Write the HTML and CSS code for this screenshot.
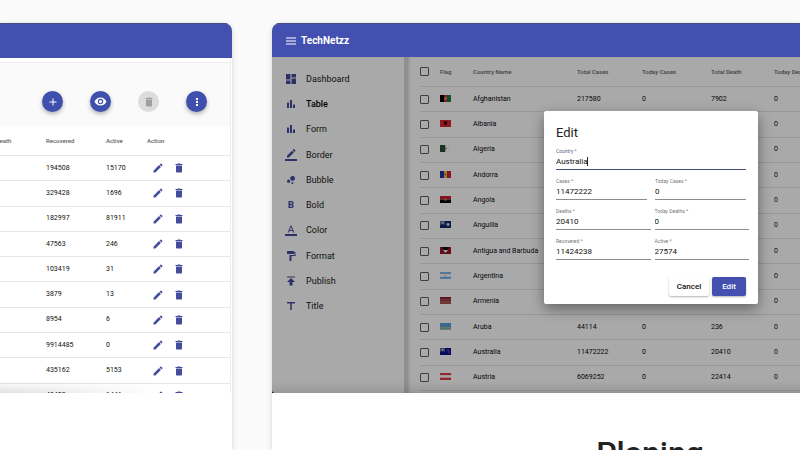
FILE: index.html
```html
<!DOCTYPE html>
<html lang="en">
<head>
<meta charset="utf-8">
<title>TechNetzz</title>
<link rel="stylesheet" href="styles.css">
</head>
<body>
<svg class="defs" aria-hidden="true">
  <symbol id="pen" viewBox="0 0 24 24"><path d="M3 17.25V21h3.75L17.81 9.94l-3.75-3.75zM20.71 7.04a1 1 0 0 0 0-1.41l-2.34-2.34a1 1 0 0 0-1.41 0l-1.83 1.83 3.75 3.75z"/></symbol>
  <symbol id="bin" viewBox="0 0 24 24"><path d="M6 19c0 1.100.9 2 2 2h8c1.100 0 2-.9 2-2V7H6zM19 4h-3.500l-1-1h-5l-1 1H5v2h14z"/></symbol>
  <symbol id="bars" viewBox="0 0 24 24"><path d="M4 9h4v11H4zM16 13h4v7h-4zM10 4h4v16h-4z"/></symbol>
</svg>
<main class="gallery">
  <article class="card">
    <header class="bar"></header>
    <div class="shot sheet">
      <div class="tools">
        <button class="fab" aria-label="Add"><svg viewBox="0 0 24 24"><path d="M19 13h-6v6h-2v-6H5v-2h6V5h2v6h6z"/></svg></button>
        <button class="fab" aria-label="View"><svg class="eye" viewBox="0 0 24 24"><path d="M12 4.500C7 4.500 2.730 7.610 1 12c1.730 4.390 6 7.500 11 7.500s9.270-3.110 11-7.500c-1.730-4.390-6-7.500-11-7.500zM12 17a5 5 0 1 1 0-10 5 5 0 0 1 0 10zm0-8a3 3 0 1 0 0 6 3 3 0 0 0 0-6z"/></svg></button>
        <button class="fab off" aria-label="Delete" disabled><svg viewBox="0 0 24 24"><use href="#bin"/></svg></button>
        <button class="fab" aria-label="More"><svg viewBox="0 0 24 24"><path d="M10 4h4v4h-4zM10 10h4v4h-4zM10 16h4v4h-4z"/></svg></button>
      </div>
      <table class="grid results">
        <thead><tr><th class="c-today">Today Death</th><th class="c-rec">Recovered</th><th class="c-act">Active</th><th>Action</th></tr></thead>
        <tbody id="results"></tbody>
      </table>
    </div>
  </article>

  <article class="card">
    <header class="bar">
      <button class="menu" aria-label="Menu"><svg viewBox="0 0 24 24"><path d="M2 19h20v-2H2zm0-6h20v-2H2zm0-8v2h20V5z"/></svg></button>
      <span class="brand">TechNetzz</span>
    </header>
    <div class="shot app">
      <nav class="side">
        <a href="#"><svg viewBox="0 0 24 24"><path d="M2 13h9V2H2zm0 9h9v-7H2zm11 0h9V11h-9zm0-20v7h9V2z"/></svg>Dashboard</a>
        <a href="#" class="on"><svg viewBox="0 0 24 24"><use href="#bars"/></svg>Table</a>
        <a href="#"><svg viewBox="0 0 24 24"><use href="#bars"/></svg>Form</a>
        <a href="#"><svg viewBox="0 0 24 24"><path d="M17.750 7 14 3.250l-10 10V17h3.750zm2.960-2.960a1 1 0 0 0 0-1.410L18.370.29a1 1 0 0 0-1.410 0L15 2.250 18.750 6zM0 20h24v4H0z"/></svg>Border</a>
        <a href="#"><svg viewBox="0 0 24 24"><circle cx="7.200" cy="14.400" r="3.200"/><circle cx="14.800" cy="18" r="2"/><circle cx="15.200" cy="8.800" r="4.800"/></svg>Bubble</a>
        <a href="#"><svg viewBox="0 0 24 24"><path d="M15.600 10.790c.97-.67 1.650-1.770 1.650-2.790 0-2.260-1.750-4-4-4H7v14h7.040c2.090 0 3.710-1.700 3.710-3.790 0-1.520-.86-2.820-2.150-3.420zM10 6.500h3a1.500 1.500 0 0 1 0 3h-3zm3.500 9H10v-3h3.500a1.500 1.500 0 0 1 0 3z"/></svg>Bold</a>
        <a href="#"><svg viewBox="0 0 24 24"><path d="M0 20h24v4H0zM11 3 5.500 17h2.250l1.120-3h6.250l1.120 3h2.250L13 3zm-1.380 9L12 5.670 14.380 12z"/></svg>Color</a>
        <a href="#"><svg viewBox="0 0 24 24"><path d="M18 4V3a1 1 0 0 0-1-1H5a1 1 0 0 0-1 1v4a1 1 0 0 0 1 1h12a1 1 0 0 0 1-1V6h1v4H9v11a1 1 0 0 0 1 1h2a1 1 0 0 0 1-1v-9h8V4z"/></svg>Format</a>
        <a href="#"><svg viewBox="0 0 24 24"><path d="M4 3v2h16V3zm0 11h5v7h6v-7h5l-8-8z"/></svg>Publish</a>
        <a href="#"><svg viewBox="0 0 24 24"><path d="M4 4v3h6.500v13h3V7H20V4z"/></svg>Title</a>
      </nav>
      <div class="pane">
        <table class="grid countries">
          <thead><tr><th class="c-tick"><input type="checkbox" aria-label="Select all"></th><th class="c-flag">Flag</th><th class="c-name">Country Name</th><th class="c-total">Total Cases</th><th class="c-new">Today Cases</th><th class="c-death">Total Death</th><th>Today Death</th></tr></thead>
          <tbody id="countries"></tbody>
        </table>
      </div>
      <div class="shade"></div>
      <form class="dialog" role="dialog" aria-labelledby="dlg">
        <h2 id="dlg">Edit</h2>
        <div class="row"><p class="field focus"><label for="f1">Country *</label><input id="f1" value="Australia"><i class="caret"></i></p></div>
        <div class="row"><p class="field"><label for="f2">Cases *</label><input id="f2" value="11472222"></p><p class="field"><label for="f3">Today Cases *</label><input id="f3" value="0"></p></div>
        <div class="row wide"><p class="field"><label for="f4">Deaths *</label><input id="f4" value="20410"></p><p class="field"><label for="f5">Today Deaths *</label><input id="f5" value="0"></p></div>
        <div class="row wide"><p class="field"><label for="f6">Recovered *</label><input id="f6" value="11424238"></p><p class="field"><label for="f7">Active *</label><input id="f7" value="27574"></p></div>
        <div class="acts"><button type="button" class="btn">Cancel</button><button type="button" class="btn main">Edit</button></div>
      </form>
    </div>
    <h1 class="caption">Planing</h1>
  </article>
</main>
<script src="app.js"></script>
</body>
</html>
```
FILE: styles.css
```css
* { box-sizing: border-box; }
body { margin: 0; background: #fafafa; font-family: Roboto, "Liberation Sans", sans-serif; color: #222; height: 100vh; overflow: hidden; }
.defs { position: absolute; width: 0; height: 0; }
svg { display: block; fill: currentColor; }
button { font: inherit; border: 0; padding: 0; }

.gallery { display: grid; grid-template-columns: 29% minmax(0, 1fr); column-gap: 5%; height: 100vh; padding-top: 23px; overflow: hidden; }
.card { background: #fff; border-radius: 8px 0 0 0; overflow: hidden; box-shadow: 0 1px 5px rgba(0, 0, 0, .16); }
.card:first-child { border-radius: 0 8px 0 0; }
.bar { display: flex; align-items: center; gap: 4px; height: 34px; padding-left: 13px; background: #4450af; border-top: 1px solid #464b85; color: #fff; }
.card:first-child .bar { height: 35px; }
.menu { background: none; color: inherit; }
.menu svg { width: 12px; height: 12px; }
.brand { font-size: 10px; font-weight: 700; }
.shot { position: relative; height: 336px; overflow: hidden; }

.sheet { height: 335px; padding-top: 4px; margin-right: 1px; border-right: 1px solid #eee; }
.sheet::after, .pane::after { content: ""; position: absolute; left: 0; right: 0; bottom: 0; height: 12px; background: linear-gradient(transparent, rgba(0, 0, 0, .1)); }
.sheet::after { right: 30%; background: linear-gradient(90deg, rgba(0, 0, 0, .12), transparent); mask-image: linear-gradient(transparent, #000); }
.tools { display: flex; justify-content: flex-end; align-items: center; gap: 27px; height: 64px; padding: 14px 23px 0 0; background: #fafafa; border-top: 1px solid #f0f0f0; }
.fab { width: 21px; height: 21px; border-radius: 50%; display: grid; place-items: center; background: #3f4fae; color: #fff; box-shadow: 0 2px 4px rgba(0, 0, 0, .3); }
.fab svg { width: 12px; height: 12px; }
.fab .eye { width: 13px; height: 13px; }
.fab.off { background: #dcdcdc; color: #a0a0a0; box-shadow: none; }

.grid { border-collapse: separate; border-spacing: 0; table-layout: fixed; font-size: 7px; line-height: 9px; color: #111; }
.grid th, .grid td { padding: 0; text-align: left; white-space: nowrap; vertical-align: middle; border-bottom: 1px solid #e6e6e6; }
.grid th { height: 30px; padding-bottom: 1px; font-size: 6px; font-weight: 500; color: #606060; }
.results { height: 283px; width: 254px; margin-left: -22px; }
.c-today { width: 68px; }
.c-rec { width: 60px; }
.c-act { width: 41px; }
.edit { display: flex; gap: 9px; padding-left: 5px; }
.edit button { background: none; color: #444d9c; }
.edit svg { width: 12px; height: 12px; }

.app { display: flex; background: #fafafa; }
.side { width: 132px; height: 262px; padding: 9px 0 0; display: flex; flex-direction: column; }
.side a { flex: 1; display: flex; align-items: center; gap: 9px; padding-left: 13px; font-size: 9px; color: #161616; text-decoration: none; }
.side a.on { font-weight: 500; color: #000; }
.side svg { width: 12px; height: 12px; color: #45499a; }
.pane { flex: 1; min-width: 0; overflow: hidden; padding-left: 12px; border-left: 4px solid #d3d3d3; box-shadow: inset 2px 0 2px rgba(0, 0, 0, .1); }
.countries { height: 334px; width: 500px; color: #080808; }
.countries th, .countries td { border-color: #dedede; }
.c-tick { width: 20px; }
.c-flag { width: 33px; }
.c-name { width: 104px; }
.c-total { width: 65px; }
.c-new { width: 69px; }
.c-death { width: 63px; }
.countries input { appearance: none; display: block; margin: 0; width: 9px; height: 9px; border: 1px solid #5c5c5c; border-radius: 1px; }
.flag { width: 11px; height: 7px; margin-bottom: 2px; }
.shade { position: absolute; inset: 0; background: rgba(0, 0, 0, .32); border-radius: 0 0 0 3px; box-shadow: 0 0 0 4px #000; }

.dialog { position: absolute; top: 54px; left: 272px; width: 214px; padding: 14px 12px 8px; background: #fff; border-radius: 2px; box-shadow: 0 5px 14px rgba(0, 0, 0, .4); }
.dialog h2 { margin: 0 0 7px; font-size: 13px; line-height: 16px; font-weight: 400; }
.row { display: flex; gap: 8px; height: 30px; }
.row.wide { gap: 4px; margin-right: -3px; }
.field { flex: 1; min-width: 0; margin: 0; height: 22px; position: relative; border-bottom: 1px solid #8c8c8c; }
.field label { display: block; font-size: 5px; line-height: 6px; color: #777; }
.field input { display: block; width: 100%; height: 15px; padding: 0; border: 0; outline: 0; background: none; font: 8px/15px Roboto, sans-serif; color: #111; }
.field.focus { border-color: #454c80; }
.field.focus label { color: #5a5f8c; }
.caret { position: absolute; left: 31px; top: 9px; width: 1px; height: 9px; background: #222; }
.acts { display: flex; justify-content: flex-end; gap: 3px; padding-top: 9px; }
.btn { width: 40px; height: 19px; border-radius: 2px; background: #fff; font-size: 8px; font-weight: 500; color: #111; box-shadow: 0 1px 2px rgba(0, 0, 0, .3); }
.btn.main { width: 34px; background: #4450af; color: #fff; }
.caption { margin: 40px 0 0 228px; width: 300px; text-align: center; font-size: 32px; line-height: 40px; font-weight: 500; }
```
FILE: app.js
```js
const results = [[194508, 15170], [329428, 1696], [182997, 81911], [47563, 246], [103419, 31], [3879, 13], [8954, 6], [9914485, 0], [435162, 5153], [43402, 1446]];
const icon = (id, label) => `<button aria-label="${label}"><svg viewBox="0 0 24 24"><use href="#${id}"/></svg></button>`;
document.getElementById("results").innerHTML = results.map(([rec, act]) =>
  `<tr><td></td><td>${rec}</td><td>${act}</td><td><div class="edit">${icon("pen", "Edit")}${icon("bin", "Delete")}</div></td></tr>`).join("");

const box = (x, y, w, h, c) => `<rect x="${x}" y="${y}" width="${w}" height="${h}" fill="${c}"/>`;
const dot = (x, y, r, c) => `<circle cx="${x}" cy="${y}" r="${r}" fill="${c}"/>`;
const cols = (a, b, c) => box(0, 0, 4, 7, a) + box(4, 0, 3, 7, b) + box(7, 0, 4, 7, c);
const bands = (a, b, c) => box(0, 0, 11, 2.3, a) + box(0, 2.3, 11, 2.4, b) + box(0, 4.7, 11, 2.3, c);
const union = '<path d="M0 0 5 3.500M5 0 0 3.500M2.500 0v3.500M0 1.800h5" stroke="#ccc" stroke-width=".6"/>';
const countries = [
  ["Afghanistan", 217580, 0, 7902, cols("#000", "#c32d20", "#187a34") + dot(5.5, 3.5, 1.2, "#d99")],
  ["Albania", "", "", "", box(0, 0, 11, 7, "#d22630") + '<path d="M3.500 1.500h4L6.800 4 5.500 6 4.200 4z" fill="#300"/>'],
  ["Algeria", "", "", "", box(0, 0, 5.5, 7, "#204a37") + box(5.5, 0, 5.5, 7, "#f4f4f4") + dot(5.7, 3.5, 1, "#c66")],
  ["Andorra", "", "", "", cols("#1a3292", "#f2b83a", "#c52138") + dot(5.5, 3.5, 1, "#a85c3c")],
  ["Angola", "", "", "", box(0, 0, 11, 3.5, "#cc1830") + box(0, 3.5, 11, 3.5, "#080808") + dot(5.5, 3.5, 1.2, "#c77850")],
  ["Anguilla", "", "", "", box(0, 0, 11, 7, "#102a6b") + union + dot(8, 3.5, 1.4, "#ddd")],
  ["Antigua and Barbuda", "", "", "", box(0, 0, 11, 7, "#9c1429") + '<path d="M2 0h7L5.500 7z" fill="#111"/><path d="M3 3h5L5.500 6z" fill="#eee"/>'],
  ["Argentina", "", "", "", bands("#79aee3", "#f2f2f2", "#79aee3") + dot(5.5, 3.5, .7, "#c99b52")],
  ["Armenia", "", "", "", bands("#8e2130", "#8c3040", "#a35345")],
  ["Aruba", 44114, 0, 236, box(0, 0, 11, 7, "#5599d2") + box(0, 4.5, 11, .7, "#d5c968") + box(0, 6, 11, .7, "#d5c968")],
  ["Australia", 11472222, 0, 20410, box(0, 0, 11, 7, "#10108a") + union + dot(8, 2, .6, "#ddd") + dot(9, 4, .6, "#ddd")],
  ["Austria", 6069252, 0, 22414, bands("#d83a42", "#f2f2f2", "#d83a42")]
];
document.getElementById("countries").innerHTML = countries.map(([name, total, today, death, flag]) =>
  `<tr><td><input type="checkbox" aria-label="Select ${name}"></td><td><svg class="flag" viewBox="0 0 11 7">${flag}</svg></td><td>${name}</td><td>${total}</td><td>${today}</td><td>${death}</td><td>0</td></tr>`).join("");
```
